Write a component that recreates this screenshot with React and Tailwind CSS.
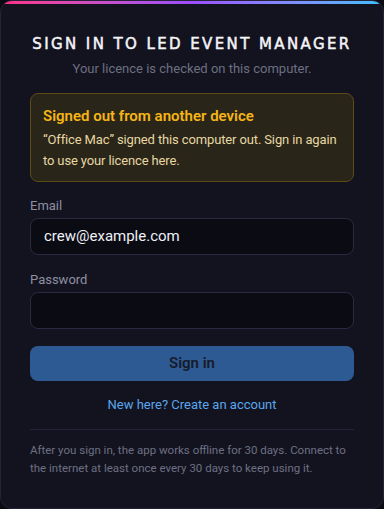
import React from "react";

const App = () => {
  return (
    <div className="w-[384px] h-[509px] bg-[#0a0a12]" style={{ fontFamily: "Roboto, 'Noto Sans', sans-serif" }}>
      {/* card */}
      <div className="relative w-full h-full rounded-[12px] border border-[#24233a] bg-[#13131f] overflow-hidden">
        {/* top accent */}
        <div className="h-[3px] w-full bg-gradient-to-r from-[#ff2d87] via-[#9b4dff] to-[#38bdf8]" />

        <div className="px-[29px] pt-[31px]">
          <h1
            className="text-center text-[15px] font-normal tracking-[0.16em] text-[#f4f4f8] leading-[18px] [-webkit-text-stroke:0.5px_#f4f4f8]"
            style={{ fontFamily: "'DejaVu Sans', sans-serif" }}
          >
            SIGN IN TO LED EVENT MANAGER
          </h1>
          <p className="mt-[7px] text-center text-[13px] leading-[18px] text-[#6c6f82]">
            Your licence is checked on this computer.
          </p>

          {/* alert */}
          <div className="mt-[15px] rounded-[8px] border border-[#5c4a17] bg-[#2a2519] px-[12px] pt-[11px] pb-[10px]">
            <div className="text-[15px] font-semibold leading-[22px] text-[#f5b517]">
              Signed out from another device
            </div>
            <p className="mt-[2px] text-[13px] tracking-[-0.01em] leading-[21px] text-[#e6d7a3]">
              “Office Mac” signed this computer out. Sign in again to use your licence here.
            </p>
          </div>

          {/* email */}
          <label className="mt-[15px] block text-[13px] leading-[18px] text-[#8d90a3]">Email</label>
          <div className="mt-[3px] h-[37px] rounded-[8px] border border-[#2a2942] bg-[#0b0b14] px-[13px] flex items-center text-[15px] text-[#eef0f6]">
            crew@example.com
          </div>

          {/* password */}
          <label className="mt-[16px] block text-[13px] leading-[18px] text-[#8d90a3]">Password</label>
          <div className="mt-[3px] h-[37px] rounded-[8px] border border-[#2a2942] bg-[#0b0b14]" />

          {/* button */}
          <button className="mt-[17px] w-full h-[35px] rounded-[8px] bg-[#2e5a93] text-[15px] font-semibold text-[#161b2a]">
            Sign in
          </button>

          <div className="mt-[15px] text-center text-[13px] leading-[18px] text-[#5aa6ee]">
            New here? Create an account
          </div>

          <div className="mt-[15px] h-px bg-[#22223a]" />

          <p className="mt-[12px] text-[11.5px] leading-[17.5px] text-[#6d7083]">
            After you sign in, the app works offline for 30 days. Connect to the internet at least once every 30 days to keep using it.
          </p>
        </div>
      </div>
    </div>
  );
};

export default App;
